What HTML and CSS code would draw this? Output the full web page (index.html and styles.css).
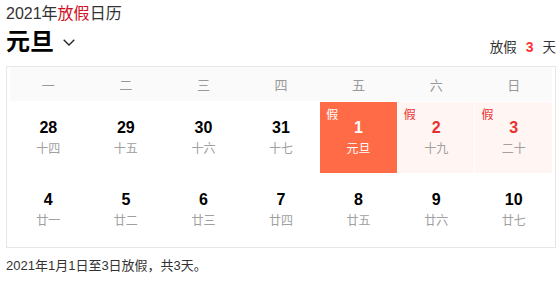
FILE: index.html
```html
<!DOCTYPE html>
<html lang="zh">
<head>
<meta charset="utf-8">
<link rel="stylesheet" href="styles.css">
</head>
<body>
<div class="page">
  <div class="title">2021年<span class="red">放假</span>日历</div>
  <div class="head">
    <div class="name">元旦
      <svg class="chev" width="12" height="7" viewBox="0 0 12 7"><polyline points="0.7,0.7 6,6 11.3,0.7" fill="none" stroke="#222" stroke-width="1.3"/></svg>
    </div>
    <div class="days">放假<b>3</b>天</div>
  </div>
  <div class="cal">
    <div class="week">
      <span>一</span><span>二</span><span>三</span><span>四</span><span>五</span><span>六</span><span>日</span>
    </div>
    <div class="grid">
      <div class="cell"><div class="num">28</div><div class="lunar">十四</div></div>
      <div class="cell"><div class="num">29</div><div class="lunar">十五</div></div>
      <div class="cell"><div class="num">30</div><div class="lunar">十六</div></div>
      <div class="cell"><div class="num">31</div><div class="lunar">十七</div></div>
      <div class="cell hol main"><span class="tag">假</span><div class="num">1</div><div class="lunar">元旦</div></div>
      <div class="cell hol"><span class="tag">假</span><div class="num">2</div><div class="lunar">十九</div></div>
      <div class="cell hol"><span class="tag">假</span><div class="num">3</div><div class="lunar">二十</div></div>
      <div class="cell"><div class="num">4</div><div class="lunar">廿一</div></div>
      <div class="cell"><div class="num">5</div><div class="lunar">廿二</div></div>
      <div class="cell"><div class="num">6</div><div class="lunar">廿三</div></div>
      <div class="cell"><div class="num">7</div><div class="lunar">廿四</div></div>
      <div class="cell"><div class="num">8</div><div class="lunar">廿五</div></div>
      <div class="cell"><div class="num">9</div><div class="lunar">廿六</div></div>
      <div class="cell"><div class="num">10</div><div class="lunar">廿七</div></div>
    </div>
  </div>
  <div class="foot">2021年1月1日至3日放假，共3天。</div>
</div>
</body>
</html>
```

FILE: styles.css
```css
* { box-sizing: border-box; }
html, body { margin: 0; padding: 0; background: #fff; }
body {
  font-family: "Liberation Sans", "Noto Sans CJK SC", sans-serif;
  color: #333;
}
.page { padding: 4px 4px 0 6px; }
.title { font-size: 16px; line-height: 20px; color: #333; }
.red { color: #d0101e; }
.head {
  display: flex;
  justify-content: space-between;
  height: 36px;
}
.name {
  display: flex;
  align-items: center;
  font-size: 24px;
  font-weight: bold;
  color: #000;
  line-height: 36px;
}
.chev { margin-left: 9px; margin-top: 1px; }
.days {
  align-self: flex-end;
  font-size: 13.5px;
  line-height: 20px;
  padding-bottom: 2px;
  color: #333;
}
.days b {
  color: #f33;
  font-size: 14px;
  margin: 0 9px;
}
.cal {
  margin-top: 6px;
  border: 1px solid #e6e6e6;
  padding: 0 3px 2px 3px;
}
.week, .grid {
  display: grid;
  grid-template-columns: repeat(7, 1fr);
  column-gap: 1px;
}
.week {
  background: #fafafa;
  height: 34px;
  align-items: center;
  text-align: center;
  font-size: 13px;
  color: #999;
}
.grid { margin-top: 1px; row-gap: 1px; grid-auto-rows: 71px; }
.cell {
  position: relative;
  display: flex;
  flex-direction: column;
  align-items: center;
  justify-content: center;
}
.num {
  font-size: 16px;
  font-weight: bold;
  line-height: 20px;
  color: #000;
}
.lunar {
  font-size: 12px;
  line-height: 16px;
  margin-top: 3px;
  color: #a0a0a0;
}
.hol { background: #fff5f3; }
.hol .num { color: #e8312f; }
.tag {
  position: absolute;
  top: 5px;
  left: 6px;
  font-size: 12px;
  line-height: 17px;
  color: #e8312f;
}
.main { background: #ff6a47; }
.main .num, .main .lunar, .main .tag { color: #fff; }
.foot {
  margin-top: 9px;
  font-size: 13px;
  line-height: 18px;
  color: #333;
}
```
